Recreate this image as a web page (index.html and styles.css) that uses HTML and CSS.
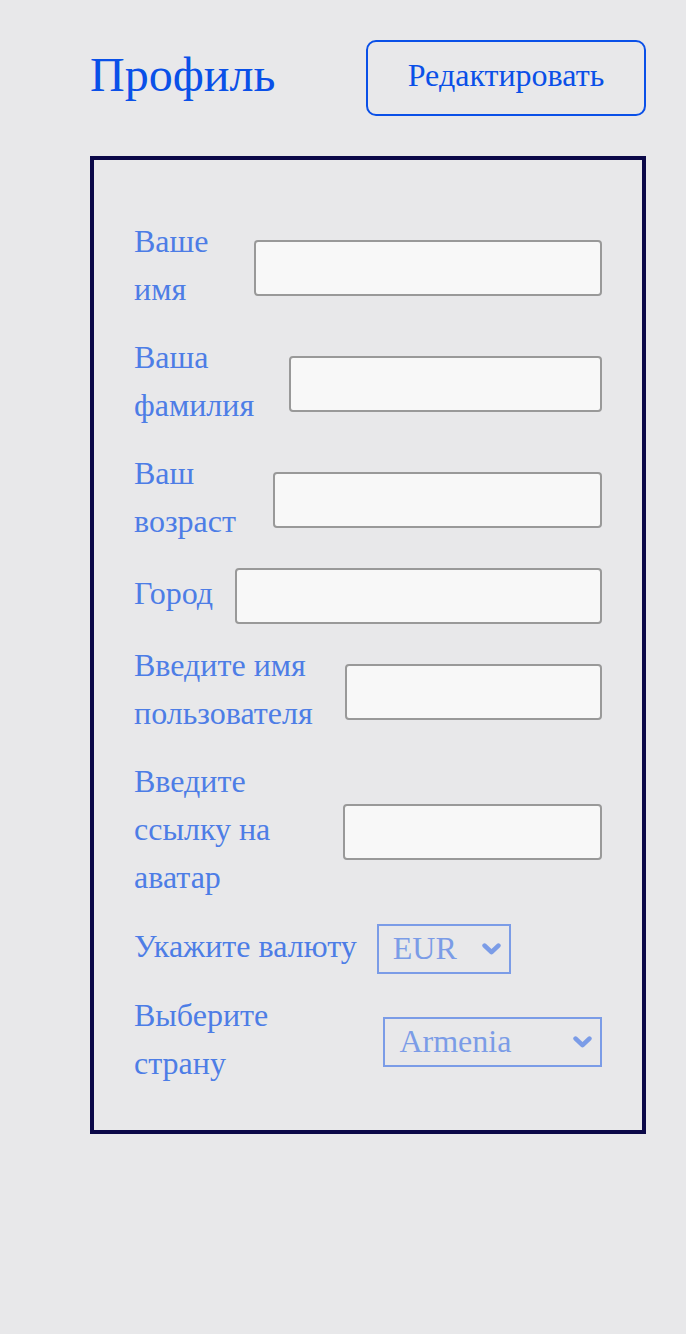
FILE: index.html
```html
<!DOCTYPE html>
<html lang="ru">
<head>
<meta charset="utf-8">
<title>Профиль</title>
<link rel="stylesheet" href="styles.css">
</head>
<body>
<div class="page">
  <header class="header">
    <h1 class="title">Профиль</h1>
    <button class="edit-btn" type="button">Редактировать</button>
  </header>
  <section class="card">
    <form class="form">
      <div class="row">
        <label class="label" for="f-name">Ваше имя</label>
        <input class="field" id="f-name" type="text">
      </div>
      <div class="row">
        <label class="label" for="f-surname">Ваша фамилия</label>
        <input class="field" id="f-surname" type="text">
      </div>
      <div class="row">
        <label class="label" for="f-age">Ваш возраст</label>
        <input class="field" id="f-age" type="text">
      </div>
      <div class="row">
        <label class="label" for="f-city">Город</label>
        <input class="field" id="f-city" type="text">
      </div>
      <div class="row">
        <label class="label" for="f-user">Введите имя пользователя</label>
        <input class="field" id="f-user" type="text">
      </div>
      <div class="row">
        <label class="label" for="f-avatar">Введите ссылку на аватар</label>
        <input class="field" id="f-avatar" type="text">
      </div>
      <div class="row">
        <label class="label" for="f-cur">Укажите валюту</label>
        <select class="picker picker-currency" id="f-cur" disabled>
          <option>EUR</option>
          <option>USD</option>
          <option>RUB</option>
        </select>
      </div>
      <div class="row">
        <label class="label" for="f-country">Выберите страну</label>
        <select class="picker picker-country" id="f-country" disabled>
          <option>Armenia</option>
          <option>Russia</option>
          <option>Kazakhstan</option>
        </select>
      </div>
    </form>
  </section>
</div>
</body>
</html>
```

FILE: styles.css
```css
html, body {
  margin: 0;
  padding: 0;
}

body {
  background: #e8e8ea;
  font-family: "Liberation Serif", "Times New Roman", serif;
}

.page {
  padding: 40px 40px 40px 90px;
}

.header {
  display: flex;
  align-items: center;
  justify-content: space-between;
  margin-bottom: 40px;
}

.title {
  margin: 0;
  padding-bottom: 6px;
  font-size: 48px;
  font-weight: normal;
  line-height: 1.15;
  color: #0a50e8;
}

.edit-btn {
  box-sizing: border-box;
  width: 280px;
  height: 76px;
  border: 2px solid #0a50e8;
  border-radius: 10px;
  background: transparent;
  color: #0a50e8;
  font-family: "Liberation Serif", "Times New Roman", serif;
  font-size: 32px;
  padding: 0 0 6px;
}

.card {
  border: 4px solid #0b0848;
  padding: 60px 40px 40px;
}

.form {
  display: flex;
  flex-direction: column;
  gap: 20px;
}

.row {
  display: flex;
  align-items: center;
  gap: 20px;
}

.label {
  flex: 0 1 auto;
  margin-top: -3px;
  padding-bottom: 3px;
  font-size: 32px;
  line-height: 48px;
  color: #4d7de6;
}

.field {
  flex: 0 1 auto;
  width: 100%;
  min-width: 0;
  box-sizing: border-box;
  height: 56px;
  border: 2px solid #999999;
  border-radius: 4px;
  background: #f8f8f8;
  margin: 0 0 0 2px;
  padding: 0 8px;
  font-family: "Liberation Serif", "Times New Roman", serif;
  font-size: 28px;
}

.picker {
  -webkit-appearance: none;
  appearance: none;
  box-sizing: border-box;
  height: 50px;
  margin: 0;
  border: 2px solid #4d7de6;
  border-radius: 0;
  background-color: transparent;
  background-image: url("data:image/svg+xml;utf8,<svg xmlns='http://www.w3.org/2000/svg' width='19' height='12' viewBox='0 0 19 12'><path d='M2.6 2.6 L9.5 9.2 L16.4 2.6' fill='none' stroke='%234d7de6' stroke-width='4.6' stroke-linecap='round' stroke-linejoin='round'/></svg>");
  background-repeat: no-repeat;
  background-position: right 8px center;
  background-size: 19px 12px;
  color: #4d7de6;
  opacity: 0.7;
  font-family: "Liberation Serif", "Times New Roman", serif;
  font-size: 32px;
  line-height: 44px;
  padding: 0 36px 4px 14px;
}

.picker-currency {
  flex: 0 0 auto;
  width: 134px;
}

.picker-country {
  flex: 0 1 auto;
  width: 222px;
}
```
